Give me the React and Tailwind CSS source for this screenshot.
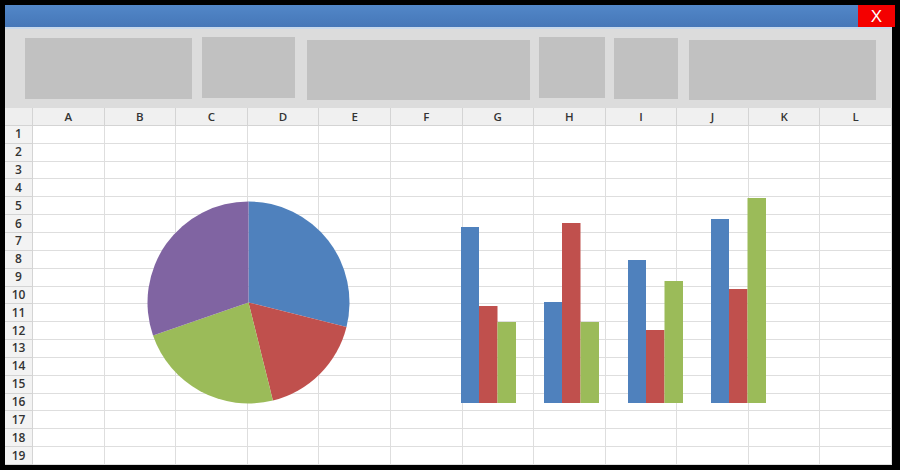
const columns = ['A', 'B', 'C', 'D', 'E', 'F', 'G', 'H', 'I', 'J', 'K', 'L'];
const rows = Array.from({ length: 19 }, (_, i) => i + 1);

const colors = {
  blue: '#4f81bd',
  red: '#c0504d',
  green: '#9bbb59',
  purple: '#8064a2',
};

// bar groups: [left x, blue top, red top, green top], baseline at y=403
const barGroups = [
  [461, 227, 306, 322],
  [544, 302, 223, 322],
  [628, 260, 330, 281],
  [711, 219, 289, 198],
];

function Chart() {
  return (
    <svg
      className="absolute left-0 top-0 pointer-events-none"
      width="887"
      height="357"
      viewBox="5 108 887 357"
    >
      <path d="M248.5 302.5 L248.5 201.5 A101 101 0 0 1 346.5 326.9 Z" fill={colors.blue} />
      <path d="M248.5 302.5 L346.5 326.9 A101 101 0 0 1 272.9 400.5 Z" fill={colors.red} />
      <path d="M248.5 302.5 L272.9 400.5 A101 101 0 0 1 153 335.4 Z" fill={colors.green} />
      <path d="M248.5 302.5 L153 335.4 A101 101 0 0 1 248.5 201.5 Z" fill={colors.purple} />

      {barGroups.map(([x, b, r, g]) => (
        <g key={x}>
          <rect x={x} y={b} width="18" height={403 - b} fill={colors.blue} />
          <rect x={x + 18} y={r} width="18.5" height={403 - r} fill={colors.red} />
          <rect x={x + 36.5} y={g} width="18.5" height={403 - g} fill={colors.green} />
        </g>
      ))}
    </svg>
  );
}

function Toolbar() {
  return (
    <div className="flex h-[81px] w-[887px] bg-[#dcdcdc] border-t-2 border-[#c9d9ec] pl-[20px]">
      <div className="mt-[9px] h-[61px] w-[167px] bg-[#c1c1c1]" />
      <div className="mt-[8px] ml-[10px] h-[61px] w-[93px] bg-[#c1c1c1]" />
      <div className="mt-[11px] ml-[12px] h-[60px] w-[223px] bg-[#c1c1c1]" />
      <div className="mt-[8px] ml-[9px] h-[61px] w-[66px] bg-[#c1c1c1]" />
      <div className="mt-[9px] ml-[9px] h-[61px] w-[64px] bg-[#c1c1c1]" />
      <div className="mt-[11px] ml-[11px] h-[60px] w-[187px] bg-[#c1c1c1]" />
    </div>
  );
}

function Sheet() {
  return (
    <div className="relative h-[357px] w-[887px] bg-white grid grid-cols-[28px_repeat(12,minmax(0,1fr))] grid-rows-[repeat(20,minmax(0,1fr))] font-['Open_Sans',sans-serif] text-[11.5px] leading-none font-semibold text-[#333]">
      <div className="bg-[#eeeeee] border-r border-b border-[#d4d4d4]" />
      {columns.map((c) => (
        <div
          key={c}
          className="flex items-center justify-center bg-[#f0f0f0] border-r border-b border-[#d4d4d4]"
        >
          {c}
        </div>
      ))}
      {rows.map((r) => (
        <Row key={r} n={r} />
      ))}
      <Chart />
    </div>
  );
}

function Row({ n }) {
  return (
    <>
      <div className="flex items-center justify-center bg-[#f3f3f3] border-r border-b border-[#d4d4d4] text-[12px]">
        {n}
      </div>
      {columns.map((c) => (
        <div key={c} className="border-r border-b border-[#dedede]" />
      ))}
    </>
  );
}

export default function App() {
  return (
    <div className="h-[470px] w-[900px] bg-black p-[5px] overflow-hidden">
      <div className="flex h-[22px] w-[890px] bg-gradient-to-b from-[#5287c8] to-[#4677b8]">
        <div className="flex-1" />
        <div className="flex w-[37px] items-center justify-center bg-[#f40000] text-white text-[17px] font-['Liberation_Sans',sans-serif] pt-[2px]">
          X
        </div>
      </div>
      <Toolbar />
      <Sheet />
    </div>
  );
}
